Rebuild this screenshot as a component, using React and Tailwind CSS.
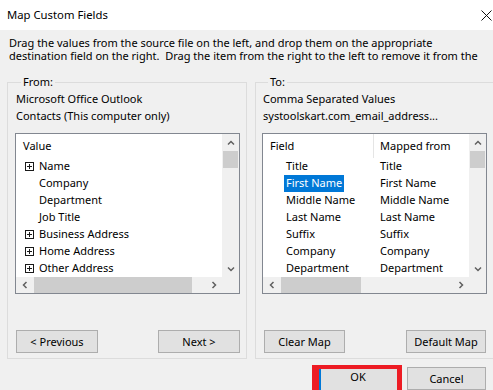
import React from "react";

const Chev = ({ dir }) => {
  const d = {
    up: "M1 5.5 L4 2.5 L7 5.5",
    down: "M1 2.5 L4 5.5 L7 2.5",
    left: "M5.5 1 L2.5 4 L5.5 7",
    right: "M2.5 1 L5.5 4 L2.5 7",
  }[dir];
  return (
    <svg width="8" height="8" viewBox="0 0 8 8">
      <path d={d} fill="none" stroke="#606060" strokeWidth="1.5" />
    </svg>
  );
};

const PlusBox = () => (
  <svg width="9" height="9" viewBox="0 0 9 9" shapeRendering="crispEdges">
    <rect x="0.5" y="0.5" width="8" height="8" fill="white" stroke="#1a1a1a" />
    <path d="M2 4.5 H7 M4.5 2 V7" stroke="#1a1a1a" />
  </svg>
);

const VScroll = () => (
  <div className="w-[17px] bg-[#f0f0f0] flex flex-col">
    <div className="h-[17px] flex items-center justify-center">
      <Chev dir="up" />
    </div>
    <div className="h-[17px] mx-[1px] bg-[#cdcdcd]" />
    <div className="flex-1" />
    <div className="h-[17px] flex items-center justify-center">
      <Chev dir="down" />
    </div>
  </div>
);

const HScroll = ({ thumbW }) => (
  <div className="h-[16px] flex bg-[#f0f0f0]">
    <div className="flex-1 flex">
      <div className="w-[17px] flex items-center justify-center">
        <Chev dir="left" />
      </div>
      <div className="ml-[1px] bg-[#cdcdcd]" style={{ width: thumbW }} />
      <div className="flex-1" />
      <div className="w-[17px] flex items-center justify-center">
        <Chev dir="right" />
      </div>
    </div>
    <div className="w-[17px]" />
  </div>
);

const Btn = ({ children, w }) => (
  <div
    className="h-[23px] border border-[#adadad] bg-[#e1e1e1] flex items-center justify-center leading-[16px]"
    style={{ width: w }}
  >
    {children}
  </div>
);

const leftRows = [
  ["Name", true],
  ["Company", false],
  ["Department", false],
  ["Job Title", false],
  ["Business Address", true],
  ["Home Address", true],
  ["Other Address", true],
];

const rightRows = [
  "Title",
  "First Name",
  "Middle Name",
  "Last Name",
  "Suffix",
  "Company",
  "Department",
];

export default function App() {
  return (
    <div className="w-[493px] h-[390px] overflow-hidden bg-[#f0f0f0] text-[11px] text-black font-['Noto_Sans',sans-serif]">
      <div className="h-[30px] bg-white flex items-center justify-between pl-[7px] pr-[1px]">
        <span className="leading-[16px] text-[11.3px]">Map Custom Fields</span>
        <svg width="11" height="11" viewBox="0 0 11 11">
          <path d="M0.5 0.5 L10.5 10.5 M10.5 0.5 L0.5 10.5" stroke="#111" strokeWidth="1" fill="none" />
        </svg>
      </div>

      <div className="pt-[6px] pl-[9px] leading-[13px] whitespace-pre">
        <div>Drag the values from the source file on the left, and drop them on the appropriate</div>
        <div>destination field on the right.  Drag the item from the right to the left to remove it from the</div>
      </div>

      <div className="flex gap-[8px] pl-[7px] mt-[12px]">
        <fieldset className="w-[240px] shrink-0 border border-[#dcdcdc] pl-[7px] pr-[6px] pb-[5px]">
          <legend className="ml-[6px] px-[2px] leading-[16px]">From:</legend>
          <div className="pl-[1px] leading-[17px]">
            <div>Microsoft Office Outlook</div>
            <div>Contacts (This computer only)</div>
          </div>
          <div className="mt-[9px] w-[225px] h-[161px] border border-[#828790] bg-white flex flex-col">
            <div className="flex flex-1 min-h-0">
              <div className="flex-1 overflow-hidden">
                <div className="h-[24px] flex items-center pl-[7px]">Value</div>
                {leftRows.map(([t, plus]) => (
                  <div key={t} className="h-[17px] flex items-center pl-[9px] whitespace-nowrap">
                    <div className="w-[9px] h-[9px] flex">{plus ? <PlusBox /> : null}</div>
                    <span className="ml-[5px]">{t}</span>
                  </div>
                ))}
              </div>
              <VScroll />
            </div>
            <HScroll thumbW={158} />
          </div>
          <div className="mt-[36px] flex justify-between pl-[1px]">
            <Btn w={82}>&lt; Previous</Btn>
            <Btn w={82}>Next &gt;</Btn>
          </div>
        </fieldset>

        <fieldset className="w-[240px] shrink-0 border border-[#dcdcdc] pl-[6px] pr-[7px] pb-[5px]">
          <legend className="ml-[6px] px-[2px] leading-[16px]">To:</legend>
          <div className="pl-[1px] leading-[17px]">
            <div>Comma Separated Values</div>
            <div>systoolskart.com_email_address...</div>
          </div>
          <div className="mt-[9px] w-[225px] h-[161px] border border-[#828790] bg-white flex flex-col">
            <div className="flex flex-1 min-h-0">
              <div className="flex-1 overflow-hidden">
                <div className="h-[24px] flex">
                  <div className="w-[110px] pl-[7px] flex items-center">Field</div>
                  <div className="w-px h-full bg-[#e5e5e5]" />
                  <div className="pl-[6px] flex items-center whitespace-nowrap">Mapped from</div>
                </div>
                {rightRows.map((t) => (
                  <div key={t} className="h-[17px] flex whitespace-nowrap">
                    <div className="w-[111px] pl-[21px] flex">
                      <span
                        className={
                          t === "First Name"
                            ? "px-[2px] h-full flex items-center bg-[#0078d7] text-white"
                            : "px-[2px] h-full flex items-center"
                        }
                      >
                        {t}
                      </span>
                    </div>
                    <div className="pl-[6px] flex items-center">{t}</div>
                  </div>
                ))}
              </div>
              <VScroll />
            </div>
            <HScroll thumbW={80} />
          </div>
          <div className="mt-[36px] flex justify-between pl-[2px] pr-[1px]">
            <Btn w={81}>Clear Map</Btn>
            <Btn w={80}>Default Map</Btn>
          </div>
        </fieldset>
      </div>

      <div className="flex justify-end items-start gap-[5px] pr-[7px] mt-[6px]">
        <div className="w-[90px] h-[30px] border-[#ed1c24] border-l-[7px] border-t-[4px] border-r-[5px] flex">
          <div className="flex-1 border-l-2 border-[#0078d7] bg-[#e1e1e1] text-center leading-[16px] pr-[2px]">
            OK
          </div>
        </div>
        <div className="mt-[2px]">
          <Btn w={79}>Cancel</Btn>
        </div>
      </div>
    </div>
  );
}
